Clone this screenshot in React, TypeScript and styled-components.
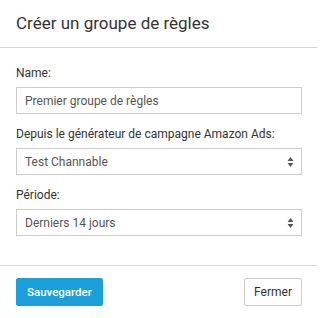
import styled, { createGlobalStyle } from "styled-components";

const GlobalStyle = createGlobalStyle`
  body {
    margin: 0;
    background: #ffffff;
    font-family: Roboto, "Liberation Sans", Arial, sans-serif;
    color: #333333;
  }
`;

const periodOptions = ["Derniers 7 jours", "Derniers 14 jours", "Derniers 30 jours"];

export default function App() {
  return (
    <>
      <GlobalStyle />
      <Modal>
        <Header>
          <Title>Créer un groupe de règles</Title>
        </Header>
        <Body>
          <Field>
            <Label htmlFor="name">Name:</Label>
            <TextInput id="name" defaultValue="Premier groupe de règles" />
          </Field>
          <Field>
            <Label htmlFor="generator">Depuis le générateur de campagne Amazon Ads:</Label>
            <SelectWrap>
              <Select id="generator" defaultValue="Test Channable">
                <option>Test Channable</option>
              </Select>
              <Caret />
            </SelectWrap>
          </Field>
          <Field>
            <Label htmlFor="period">Période:</Label>
            <SelectWrap>
              <Select id="period" defaultValue="Derniers 14 jours">
                {periodOptions.map((option) => (
                  <option key={option}>{option}</option>
                ))}
              </Select>
              <Caret />
            </SelectWrap>
          </Field>
        </Body>
        <Footer>
          <Button $primary>Sauvegarder</Button>
          <Button>Fermer</Button>
        </Footer>
      </Modal>
    </>
  );
}

function Caret() {
  return (
    <CaretIcon width="7" height="11" viewBox="0 0 7 11" aria-hidden="true">
      <path d="M3.5 0.5 L6.5 4.5 H0.5 Z" fill="#555" />
      <path d="M3.5 10.5 L6.5 6.5 H0.5 Z" fill="#555" />
    </CaretIcon>
  );
}

const Modal = styled.div`
  width: 317px;
  background: #fff;
`;

const Header = styled.div`
  height: 48px;
  display: flex;
  align-items: center;
  padding: 0 16px 2px;
  border-bottom: 1px solid #d6d6d6;
  box-sizing: border-box;
`;

const Title = styled.h4`
  margin: 0;
  font-size: 17px;
  font-weight: 400;
  color: #333;
`;

const Body = styled.div`
  display: flex;
  flex-direction: column;
  gap: 12px;
  padding: 17px 15px 29px 16px;
  border-bottom: 1px solid #d6d6d6;
`;

const Field = styled.div`
  display: flex;
  flex-direction: column;
  gap: 6px;
`;

const Label = styled.label`
  font-size: 12px;
  font-weight: 400;
  color: #333;
  line-height: 16px;
`;

const controlBase = `
  width: 100%;
  height: 27px;
  box-sizing: border-box;
  border: 1px solid #cccccc;
  border-radius: 0;
  background: #fff;
  padding: 0 8px;
  font-family: Roboto, "Liberation Sans", Arial, sans-serif;
  font-size: 12px;
  color: #555;
  outline: none;
`;

const TextInput = styled.input`
  ${controlBase}
`;

const SelectWrap = styled.div`
  position: relative;
`;

const Select = styled.select`
  ${controlBase}
  appearance: none;
  -webkit-appearance: none;
`;

const CaretIcon = styled.svg`
  position: absolute;
  right: 8px;
  top: 50%;
  transform: translateY(-50%);
  pointer-events: none;
`;

const Footer = styled.div`
  display: flex;
  justify-content: space-between;
  padding: 12px 15px 12px 16px;
`;

const Button = styled.button<{ $primary?: boolean }>`
  height: 28px;
  padding: 0 ${({ $primary }) => ($primary ? "10px" : "9px")};
  border-radius: 2px;
  border: 1px solid ${({ $primary }) => ($primary ? "#1a9fdb" : "#cccccc")};
  background: ${({ $primary }) => ($primary ? "#1a9fdb" : "#ffffff")};
  color: ${({ $primary }) => ($primary ? "#ffffff" : "#333333")};
  font-family: Roboto, "Liberation Sans", Arial, sans-serif;
  font-size: ${({ $primary }) => ($primary ? "11.5px" : "12px")};
  font-weight: ${({ $primary }) => ($primary ? 500 : 400)};
  cursor: pointer;
`;
